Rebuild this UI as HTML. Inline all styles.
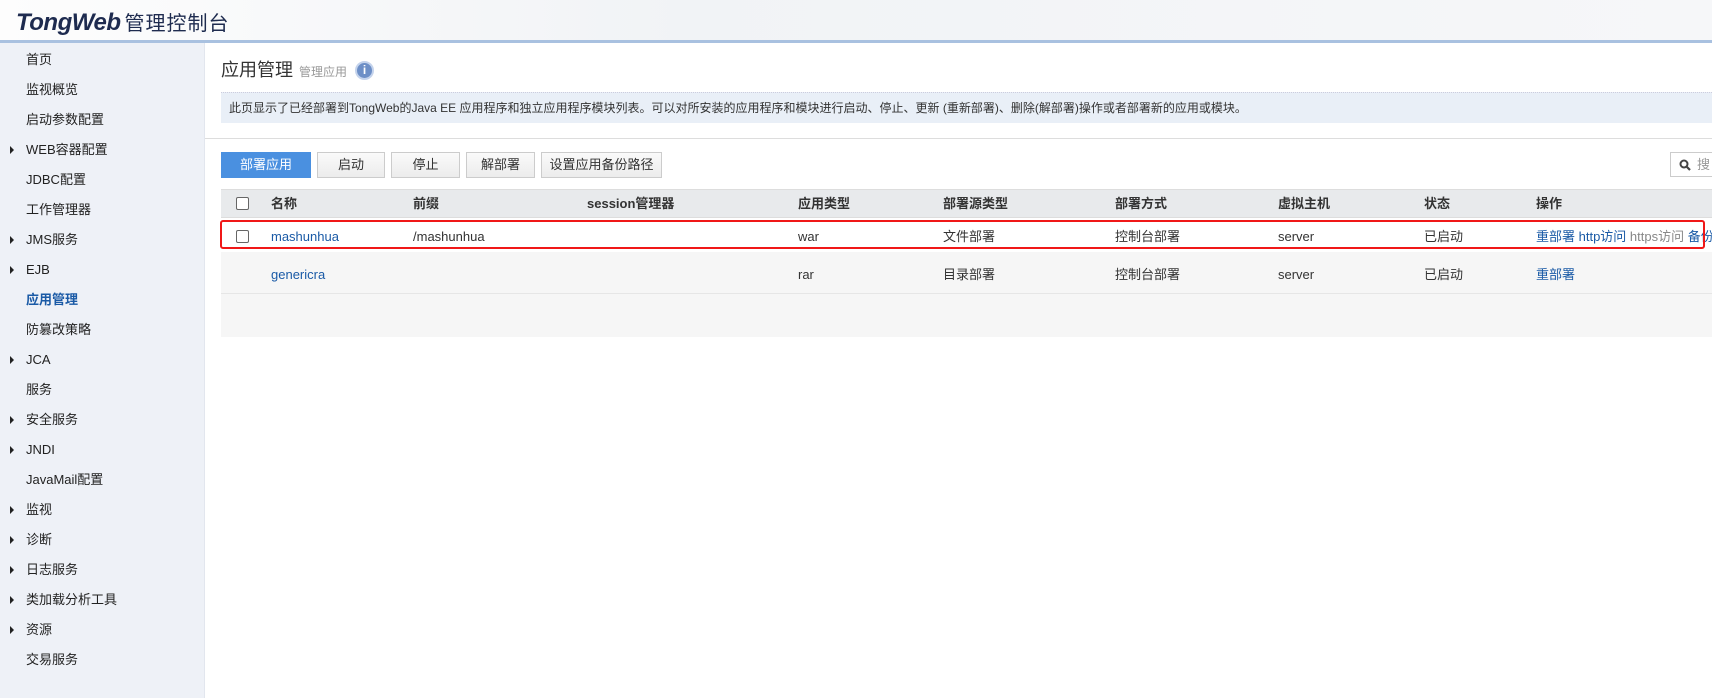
<!DOCTYPE html>
<html><head><meta charset="utf-8"><style>
*{margin:0;padding:0;box-sizing:border-box}
body{width:1712px;height:698px;overflow:hidden;background:#fff;font-family:"Liberation Sans","Noto Sans CJK SC",sans-serif;font-size:13px;color:#333;position:relative;line-height:16px}
.hdr{position:absolute;left:0;top:0;width:1712px;height:43px;background:linear-gradient(90deg,#fdfdfd,#f1f3f6 40%,#f6f7f9);border-bottom:3px solid #a9c1e0}
.logo{position:absolute;left:16px;top:10px;font-size:24px;line-height:26px;font-weight:bold;font-style:italic;color:#1e2b4f;letter-spacing:-0.5px}
.logo span{font-style:normal;font-weight:normal;font-size:20px;color:#1e2b4f;margin-left:4px;letter-spacing:1px}
.side{position:absolute;left:0;top:43px;width:205px;height:655px;background:#eef1f7;border-right:1px solid #e2e6ee}
.side div{position:absolute;left:26px;font-size:13px;color:#222;line-height:16px}
.side div.a::before{content:"";position:absolute;left:-16px;top:4px;border-left:4px solid #222;border-top:4px solid transparent;border-bottom:4px solid transparent}
.side div.cur{color:#1a5aa6;font-weight:bold}
.title{position:absolute;left:221px;top:59px;font-size:18px;line-height:22px;color:#333}
.title small{font-size:12px;color:#999;margin-left:6px}
.info{position:absolute;left:355px;top:61px;width:19px;height:19px;border-radius:50%;background:#6d8fc7;border:2px solid #c4d3ec;color:#fff;font-weight:bold;font-size:12px;text-align:center;line-height:15px}
.box{position:absolute;left:221px;top:92px;width:1491px;height:31px;background:#e9eff7;border-top:1px dotted #ccd;font-size:12px;line-height:31px;padding-left:8px;color:#333}
.hl{position:absolute;left:205px;top:138px;width:1507px;height:1px;background:#ddd}
.btn{position:absolute;top:152px;height:26px;border:1px solid #ccc;background:linear-gradient(#fafafa,#ececec);font-size:13px;line-height:24px;text-align:center;color:#333}
.btn.p{background:#4a90e0;border-color:#4a90e0;color:#fff}
.srch{position:absolute;left:1670px;top:152px;width:60px;height:25px;border:1px solid #ccc;background:#fff;color:#999;font-size:13px;line-height:23px;padding-left:26px}
.th{position:absolute;left:221px;top:189px;width:1491px;height:29px;background:#e8eaec;border-top:1px solid #ddd;border-bottom:1px solid #ddd}
.r2{position:absolute;left:221px;top:252px;width:1491px;height:85px;background:#f6f6f6}
.r2l{position:absolute;left:221px;top:293px;width:1491px;height:1px;background:#e6e6e6}
.red{position:absolute;left:220px;top:220px;width:1485px;height:29px;border:2px solid #f01818;border-radius:3px}
.t{position:absolute;font-size:13px;line-height:16px;height:16px;color:#333;white-space:nowrap}
.b{font-weight:bold}
.l{color:#1a5aa6}
.g{color:#888}
.cb{position:absolute;left:236px;width:13px;height:13px;border:1px solid #666;border-radius:2px;background:#fff}
</style></head><body>
<div class="hdr"><div class="logo">TongWeb<span>管理控制台</span></div></div>
<div class="side">
<div style="top:9px">首页</div>
<div style="top:39px">监视概览</div>
<div style="top:69px">启动参数配置</div>
<div class="a" style="top:99px">WEB容器配置</div>
<div style="top:129px">JDBC配置</div>
<div style="top:159px">工作管理器</div>
<div class="a" style="top:189px">JMS服务</div>
<div class="a" style="top:219px">EJB</div>
<div class="cur" style="top:249px">应用管理</div>
<div style="top:279px">防篡改策略</div>
<div class="a" style="top:309px">JCA</div>
<div style="top:339px">服务</div>
<div class="a" style="top:369px">安全服务</div>
<div class="a" style="top:399px">JNDI</div>
<div style="top:429px">JavaMail配置</div>
<div class="a" style="top:459px">监视</div>
<div class="a" style="top:489px">诊断</div>
<div class="a" style="top:519px">日志服务</div>
<div class="a" style="top:549px">类加载分析工具</div>
<div class="a" style="top:579px">资源</div>
<div style="top:609px">交易服务</div>
</div>
<div class="title">应用管理<small>管理应用</small></div>
<div class="info">i</div>
<div class="box">此页显示了已经部署到TongWeb的Java EE 应用程序和独立应用程序模块列表。可以对所安装的应用程序和模块进行启动、停止、更新 (重新部署)、删除(解部署)操作或者部署新的应用或模块。</div>
<div class="hl"></div>
<div class="btn p" style="left:221px;width:90px">部署应用</div>
<div class="btn" style="left:317px;width:68px">启动</div>
<div class="btn" style="left:391px;width:69px">停止</div>
<div class="btn" style="left:466px;width:69px">解部署</div>
<div class="btn" style="left:541px;width:121px">设置应用备份路径</div>
<div class="srch"><svg style="position:absolute;left:8px;top:6px" width="12" height="12" viewBox="0 0 12 12"><circle cx="5" cy="5" r="3.5" fill="none" stroke="#444" stroke-width="2"/><path d="M7.5 7.5L11 11" stroke="#444" stroke-width="2.2"/></svg>搜</div>
<div class="th"></div>
<div class="r2"></div><div class="r2l"></div>
<div class="cb" style="top:197px"></div>
<div class="t b" style="left:271px;top:196px">名称</div>
<div class="t b" style="left:413px;top:196px">前缀</div>
<div class="t b" style="left:587px;top:196px">session管理器</div>
<div class="t b" style="left:798px;top:196px">应用类型</div>
<div class="t b" style="left:943px;top:196px">部署源类型</div>
<div class="t b" style="left:1115px;top:196px">部署方式</div>
<div class="t b" style="left:1278px;top:196px">虚拟主机</div>
<div class="t b" style="left:1424px;top:196px">状态</div>
<div class="t b" style="left:1536px;top:196px">操作</div>
<div class="cb" style="top:230px"></div>
<div class="t l" style="left:271px;top:229px">mashunhua</div>
<div class="t" style="left:413px;top:229px">/mashunhua</div>
<div class="t" style="left:798px;top:229px">war</div>
<div class="t" style="left:943px;top:229px">文件部署</div>
<div class="t" style="left:1115px;top:229px">控制台部署</div>
<div class="t" style="left:1278px;top:229px">server</div>
<div class="t" style="left:1424px;top:229px">已启动</div>
<div class="t" style="left:1536px;top:229px"><span class="l">重部署 http访问</span> <span class="g">https访问</span> <span class="l">备份</span></div>
<div class="red"></div>
<div class="t l" style="left:271px;top:267px">genericra</div>
<div class="t" style="left:798px;top:267px">rar</div>
<div class="t" style="left:943px;top:267px">目录部署</div>
<div class="t" style="left:1115px;top:267px">控制台部署</div>
<div class="t" style="left:1278px;top:267px">server</div>
<div class="t" style="left:1424px;top:267px">已启动</div>
<div class="t l" style="left:1536px;top:267px">重部署</div>
</body></html>
